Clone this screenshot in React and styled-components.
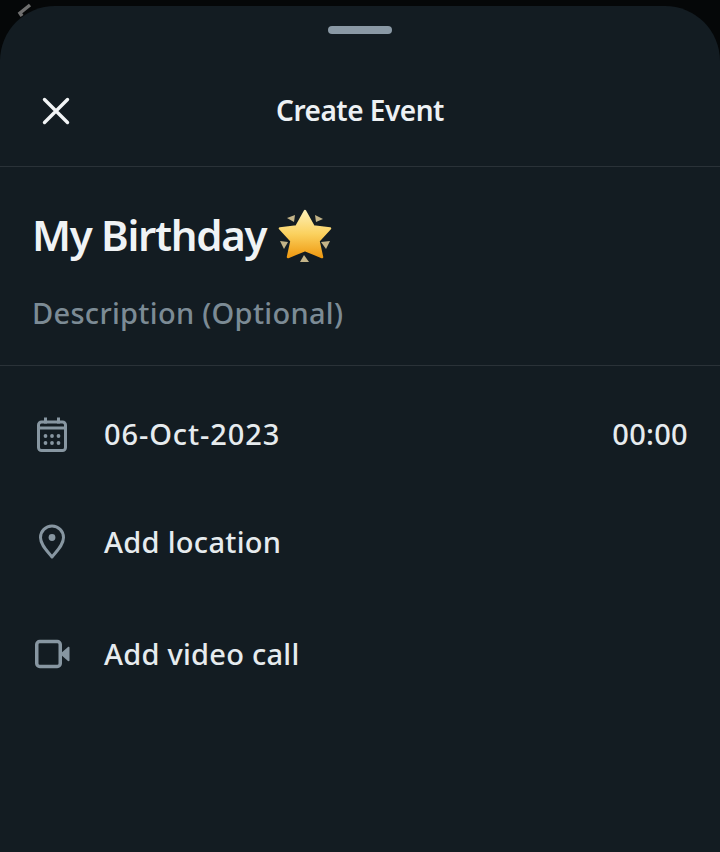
import React from "react";
import styled, { createGlobalStyle } from "styled-components";

const Global = createGlobalStyle`
  html, body { margin: 0; padding: 0; background: #050708; }
  #root { width: 720px; height: 852px; overflow: hidden; }
`;

const Screen = styled.div`
  position: relative;
  width: 720px;
  height: 852px;
  padding-top: 6px;
  box-sizing: border-box;
  background: #050708;
  font-family: "Noto Sans", "Open Sans", sans-serif;
  overflow: hidden;
`;

const BackChevron = styled.svg`
  position: absolute;
  left: 14px;
  top: 2px;
`;

const Sheet = styled.main`
  height: 846px;
  background: #131c22;
  border-radius: 55px 55px 0 0;
  display: flex;
  flex-direction: column;
`;

const Grabber = styled.div`
  width: 64px;
  height: 8px;
  margin: 20px auto 0;
  border-radius: 4px;
  background: #8a99a5;
`;

const Header = styled.header`
  position: relative;
  height: 133px;
  box-sizing: border-box;
  border-bottom: 1px solid #2a3238;
  display: flex;
  align-items: center;
  justify-content: center;
  padding-top: 20px;
`;

const CloseButton = styled.button`
  position: absolute;
  left: 40px;
  top: 61px;
  width: 32px;
  height: 32px;
  padding: 0;
  border: 0;
  background: none;
  display: flex;
  align-items: center;
  justify-content: center;
`;

const Title = styled.h1`
  margin: 0;
  color: #edf1f4;
  font-size: 28px;
  line-height: 36px;
  font-weight: 600;
  letter-spacing: -0.5px;
`;

const Intro = styled.section`
  height: 199px;
  box-sizing: border-box;
  border-bottom: 1px solid #2a3238;
  padding: 35px 32px 0;
`;

const EventName = styled.div`
  display: flex;
  align-items: center;
  gap: 12px;
  height: 64px;
  color: #f0f3f5;
  font-size: 42px;
  font-weight: 600;
  letter-spacing: -1.3px;
`;

const StarImage = styled.svg`
  flex: none;
  margin-top: 4px;
`;

const Description = styled.div`
  margin-top: 27px;
  color: #7c8b95;
  font-size: 29px;
  line-height: 40px;
  font-weight: 500;
  letter-spacing: 0.3px;
`;

const Rows = styled.section`
  display: flex;
  flex-direction: column;
  padding-top: 46px;
`;

const Row = styled.div`
  display: flex;
  align-items: center;
  height: 44px;
  margin-bottom: ${(p) => p.$gap}px;
  padding: 0 32px;
`;

const IconSlot = styled.div`
  width: 72px;
  box-sizing: border-box;
  padding-left: ${(p) => p.$inset}px;
  flex: none;
  display: flex;
  align-items: center;
  color: #8796a1;
`;

const RowText = styled.span`
  flex: 1;
  color: #e6ebee;
  font-size: 29px;
  line-height: 40px;
  font-weight: 500;
  letter-spacing: ${(p) => p.$tracking}px;
`;

const Time = styled.span`
  color: #e6ebee;
  font-size: 29px;
  line-height: 40px;
  font-weight: 500;
  letter-spacing: 0.3px;
`;

const Star = () => (
  <StarImage width="54" height="54" viewBox="0 0 54 54">
    <defs>
      <linearGradient id="star" x1="0" y1="0" x2="0" y2="1">
        <stop offset="0" stopColor="#fcefb4" />
        <stop offset="0.5" stopColor="#fbd15e" />
        <stop offset="1" stopColor="#ef9a12" />
      </linearGradient>
    </defs>
    <g fill="#c4b488">
      <path d="M9 9l8-3-1 7z" />
      <path d="M37 6l8 4-7 3z" />
      <path d="M2 32l8 1-4 7z" />
      <path d="M52 32l-9 1 5 7z" />
      <path d="M22 53h9l-5-7z" />
    </g>
    <path
      d="M27 2l8.600 15.500L52 19.500 40.500 32l3.500 16-17-7-17 7 3.500-16L2 19.500l16.400-2z"
      fill="url(#star)"
      stroke="url(#star)"
      strokeWidth="2.500"
      strokeLinejoin="round"
    />
  </StarImage>
);

const CalendarIcon = () => (
  <svg width="30" height="35" viewBox="0 0 30 35" fill="none" stroke="currentColor">
    <rect x="1.500" y="5" width="27" height="28.500" rx="3" strokeWidth="3" />
    <path d="M1.500 11h27" strokeWidth="3" />
    <path d="M8.500 0.500v6M21.500 0.500v6" strokeWidth="3" />
    <g fill="currentColor" stroke="none">
      <circle cx="8.500" cy="19" r="1.900" />
      <circle cx="15" cy="19" r="1.900" />
      <circle cx="21.500" cy="19" r="1.900" />
      <circle cx="8.500" cy="26" r="1.900" />
      <circle cx="15" cy="26" r="1.900" />
      <circle cx="21.500" cy="26" r="1.900" />
    </g>
  </svg>
);

const PinIcon = () => (
  <svg width="28" height="36" viewBox="0 0 28 36" fill="none" stroke="currentColor">
    <path
      d="M14 2C7.600 2 2.500 7.100 2.500 13.500c0 7.500 6.800 13.600 11.500 19.500 4.700-5.900 11.500-12 11.500-19.500C25.500 7.100 20.400 2 14 2z"
      strokeWidth="3"
      strokeLinejoin="round"
    />
    <circle cx="14" cy="13.500" r="3.400" fill="currentColor" stroke="none" />
  </svg>
);

const VideoIcon = () => (
  <svg width="35" height="30" viewBox="0 0 35 30" fill="none" stroke="currentColor">
    <rect x="1.750" y="2.500" width="23.500" height="25" rx="3" strokeWidth="3.500" />
    <path d="M25 15l8-7c.6-.5 1.500-.1 1.500.7v12.600c0 .8-.9 1.200-1.500.7z" fill="currentColor" stroke="none" />
  </svg>
);

export default function App() {
  return (
    <Screen>
      <Global />
      <Sheet>
        <Grabber />
        <Header>
          <CloseButton aria-label="Close">
            <svg width="32" height="32" viewBox="0 0 32 32" fill="none">
              <path d="M4.500 4.500l23 23M27.500 4.500l-23 23" stroke="#f2f4f6" strokeWidth="3.400" strokeLinecap="round" />
            </svg>
          </CloseButton>
          <Title>Create Event</Title>
        </Header>
        <Intro>
          <EventName>
            My Birthday
            <Star />
          </EventName>
          <Description>Description (Optional)</Description>
        </Intro>
        <Rows>
          <Row $gap={64}>
            <IconSlot $inset={5}><CalendarIcon /></IconSlot>
            <RowText $tracking={0.9}>06-Oct-2023</RowText>
            <Time>00:00</Time>
          </Row>
          <Row $gap={68}>
            <IconSlot $inset={6}><PinIcon /></IconSlot>
            <RowText $tracking={0.3}>Add location</RowText>
          </Row>
          <Row $gap={0}>
            <IconSlot $inset={3}><VideoIcon /></IconSlot>
            <RowText $tracking={0.25}>Add video call</RowText>
          </Row>
        </Rows>
      </Sheet>
      <BackChevron width="20" height="16" viewBox="0 0 20 16" fill="none">
        <path d="M16 3L6 11l2 3" stroke="#6f6f6f" strokeWidth="3.500" />
      </BackChevron>
    </Screen>
  );
}
